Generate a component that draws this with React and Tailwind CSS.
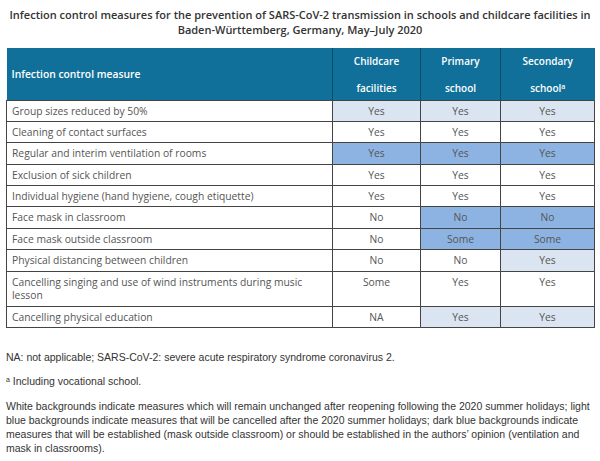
import React from "react";

const L = "bg-[#dbe5f1]";
const D = "bg-[#8db3e2]";
const W = "bg-white";

const rows = [
  ["Group sizes reduced by 50%", ["Yes", L], ["Yes", L], ["Yes", L]],
  ["Cleaning of contact surfaces", ["Yes", W], ["Yes", W], ["Yes", W]],
  ["Regular and interim ventilation of rooms", ["Yes", D], ["Yes", D], ["Yes", D]],
  ["Exclusion of sick children", ["Yes", W], ["Yes", W], ["Yes", W]],
  ["Individual hygiene (hand hygiene, cough etiquette)", ["Yes", W], ["Yes", W], ["Yes", W]],
  ["Face mask in classroom", ["No", W], ["No", D], ["No", D]],
  ["Face mask outside classroom", ["No", W], ["Some", D], ["Some", D]],
  ["Physical distancing between children", ["No", W], ["No", W], ["Yes", L]],
  ["Cancelling singing and use of wind instruments during music lesson", ["Some", W], ["Yes", W], ["Yes", W]],
  ["Cancelling physical education", ["NA", W], ["Yes", L], ["Yes", L]],
];

function Head({ a, b }) {
  return (
    <th className="p-0 align-top font-semibold border-l border-[#0b4d6b]">
      <div className="flex flex-col items-center pt-[6px] gap-[13px] leading-[14px] h-[51px]">
        <span>{a}</span>
        <span>{b}</span>
      </div>
    </th>
  );
}

export default function App() {
  return (
    <div className="w-[600px] h-[461px] bg-white overflow-hidden font-['Open_Sans',sans-serif]">
      <div className="pt-[7px] text-center text-[11px] leading-[15px] font-semibold text-[#333]">
        <div>Infection control measures for the prevention of SARS-CoV-2 transmission in schools and childcare facilities in</div>
        <div>Baden-Württemberg, Germany, May–July 2020</div>
      </div>
      <table className="mt-[11px] ml-[6px] w-[588px] table-fixed border-collapse text-[10px]">
        <colgroup>
          <col className="w-[326px]" />
          <col className="w-[88px]" />
          <col className="w-[80px]" />
          <col className="w-[94px]" />
        </colgroup>
        <thead>
          <tr className="bg-[#11709a] text-white h-[52px]">
            <th className="text-left font-semibold pl-[5px] align-middle pt-[2px] text-[10.3px]">Infection control measure</th>
            <Head a="Childcare" b="facilities" />
            <Head a="Primary" b="school" />
            <Head a="Secondary" b={<>school<sup className="text-[7px]">a</sup></>} />
          </tr>
        </thead>
        <tbody className="text-[#555] text-[10.3px]">
          {rows.map((r, i) => {
            const tall = i === 8;
            return (
              <tr key={i} className={tall ? "h-[35px]" : "h-[21.4px]"}>
                <td className="border border-[#444] bg-white pl-[5px] pr-[8px] leading-[13px] align-top pt-[4px]">{r[0]}</td>
                {[r[1], r[2], r[3]].map((c, j) => (
                  <td key={j} className={`border border-[#444] text-center leading-[13px] align-top pt-[4px] ${c[1]}`}>{c[0]}</td>
                ))}
              </tr>
            );
          })}
        </tbody>
      </table>
      <div className="ml-[6px] mt-[22px] text-[10.5px] text-[#333] font-['Liberation_Sans',Arial,sans-serif] leading-[14px] whitespace-nowrap">
        <p>NA: not applicable; SARS-CoV-2: severe acute respiratory syndrome coronavirus 2.</p>
        <p className="mt-[10px]"><sup className="text-[7px]">a</sup> Including vocational school.</p>
        <p className="mt-[11px]">
          White backgrounds indicate measures which will remain unchanged after reopening following the 2020 summer holidays; light<br />
          blue backgrounds indicate measures that will be cancelled after the 2020 summer holidays; dark blue backgrounds indicate<br />
          measures that will be established (mask outside classroom) or should be established in the authors’ opinion (ventilation and<br />
          mask in classrooms).
        </p>
      </div>
    </div>
  );
}
